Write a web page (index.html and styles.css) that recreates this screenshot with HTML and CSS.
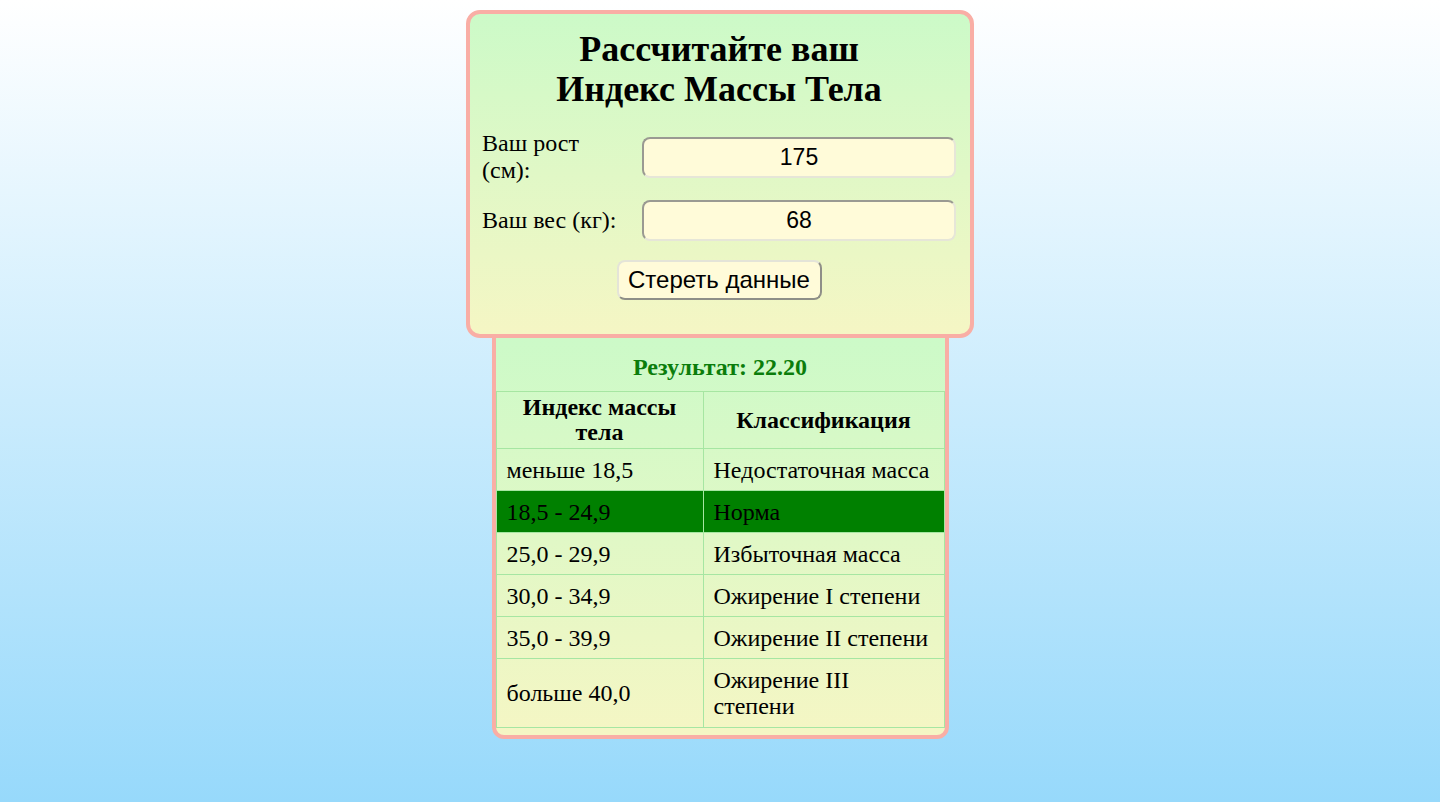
FILE: index.html
```html
<!DOCTYPE html>
<html lang="ru">
<head>
<meta charset="utf-8">
<title>Индекс Массы Тела</title>
<link rel="stylesheet" href="styles.css">
</head>
<body>
<div class="page">
  <div class="calc">
    <h1 class="title">Рассчитайте ваш<br>Индекс Массы Тела</h1>
    <div class="form">
      <label class="label" for="h">Ваш рост (см):</label>
      <input class="field" id="h" type="text" value="175">
      <label class="label" for="w">Ваш вес (кг):</label>
      <input class="field" id="w" type="text" value="68">
    </div>
    <div class="actions">
      <button class="btn" type="button">Стереть данные</button>
    </div>
  </div>
  <div class="result">
    <table class="bmi">
      <tr><td class="res" colspan="2">Результат: 22.20</td></tr>
      <tr><th class="c1">Индекс массы тела</th><th>Классификация</th></tr>
      <tr><td>меньше 18,5</td><td>Недостаточная масса</td></tr>
      <tr class="active"><td>18,5 - 24,9</td><td>Норма</td></tr>
      <tr><td>25,0 - 29,9</td><td>Избыточная масса</td></tr>
      <tr><td>30,0 - 34,9</td><td>Ожирение I степени</td></tr>
      <tr><td>35,0 - 39,9</td><td>Ожирение II степени</td></tr>
      <tr class="last"><td>больше 40,0</td><td>Ожирение III степени</td></tr>
    </table>
  </div>
</div>
</body>
</html>
```
FILE: styles.css
```css
html, body {
  margin: 0;
  padding: 0;
}
body {
  min-height: 802px;
  background: linear-gradient(to bottom, #ffffff 0%, #97d9fb 100%);
  font-family: "Liberation Serif", "Times New Roman", serif;
  font-size: 24px;
  color: #000;
}
.page {
  display: flex;
  flex-direction: column;
  align-items: center;
  padding-top: 10px;
}
.calc {
  position: relative;
  z-index: 2;
  box-sizing: border-box;
  width: 508px;
  height: 328px;
  border: 4px solid #f9aea5;
  border-radius: 14px;
  background: linear-gradient(to bottom, #ccfac8, #f5f6c4);
  padding: 0 14px 0 12px;
}
.title {
  margin: 15px 0 0;
  font-size: 36px;
  line-height: 40px;
  font-weight: bold;
  text-align: center;
}
.form {
  display: grid;
  grid-template-columns: 140px 1fr;
  column-gap: 20px;
  row-gap: 16px;
  align-items: center;
  margin-top: 21px;
}
.label {
  line-height: 27px;
}
.field {
  box-sizing: border-box;
  width: 314px;
  height: 41px;
  margin: 0;
  border: 2px solid;
  border-color: #9a9a92 #e6e6d8 #e6e6d8 #9a9a92;
  border-radius: 8px;
  background: #fffbd9;
  font-family: "Liberation Sans", Arial, sans-serif;
  font-size: 23px;
  text-align: center;
  color: #000;
  padding: 0;
}
.actions {
  display: flex;
  justify-content: center;
  margin-top: 19px;
}
.btn {
  box-sizing: border-box;
  width: 205px;
  height: 40px;
  border: 2px solid;
  border-color: #e4e4d8 #8f8f88 #8f8f88 #e4e4d8;
  border-radius: 8px;
  background: #fffbd9;
  font-family: "Liberation Sans", Arial, sans-serif;
  font-size: 24px;
  color: #000;
  padding: 0;
}
.result {
  position: relative;
  z-index: 1;
  margin-top: -4px;
  box-sizing: border-box;
  width: 457px;
  border: 4px solid #f9aea5;
  border-radius: 0 0 12px 12px;
  background: linear-gradient(to bottom, #ccfac8, #f5f6c4);
  padding-bottom: 7px;
}
.bmi {
  width: 449px;
  border-collapse: collapse;
}
.bmi td, .bmi th {
  border: 1px solid #a6e6a2;
  padding: 8px 10px 7px;
  line-height: 26px;
  text-align: left;
  vertical-align: middle;
}
.bmi th {
  text-align: center;
  font-weight: bold;
  padding: 3px 10px 3px;
  line-height: 25px;
}
.bmi .c1 {
  width: 186px;
}
.bmi td.res {
  text-align: center;
  color: #0b7d0b;
  font-weight: bold;
  padding: 16px 10px 11px;
  border-top: none;
  border-left: none;
  border-right: none;
}
.bmi tr.active td {
  background: #008000;
}
.bmi tr.last td {
  padding-bottom: 8px;
}
```
